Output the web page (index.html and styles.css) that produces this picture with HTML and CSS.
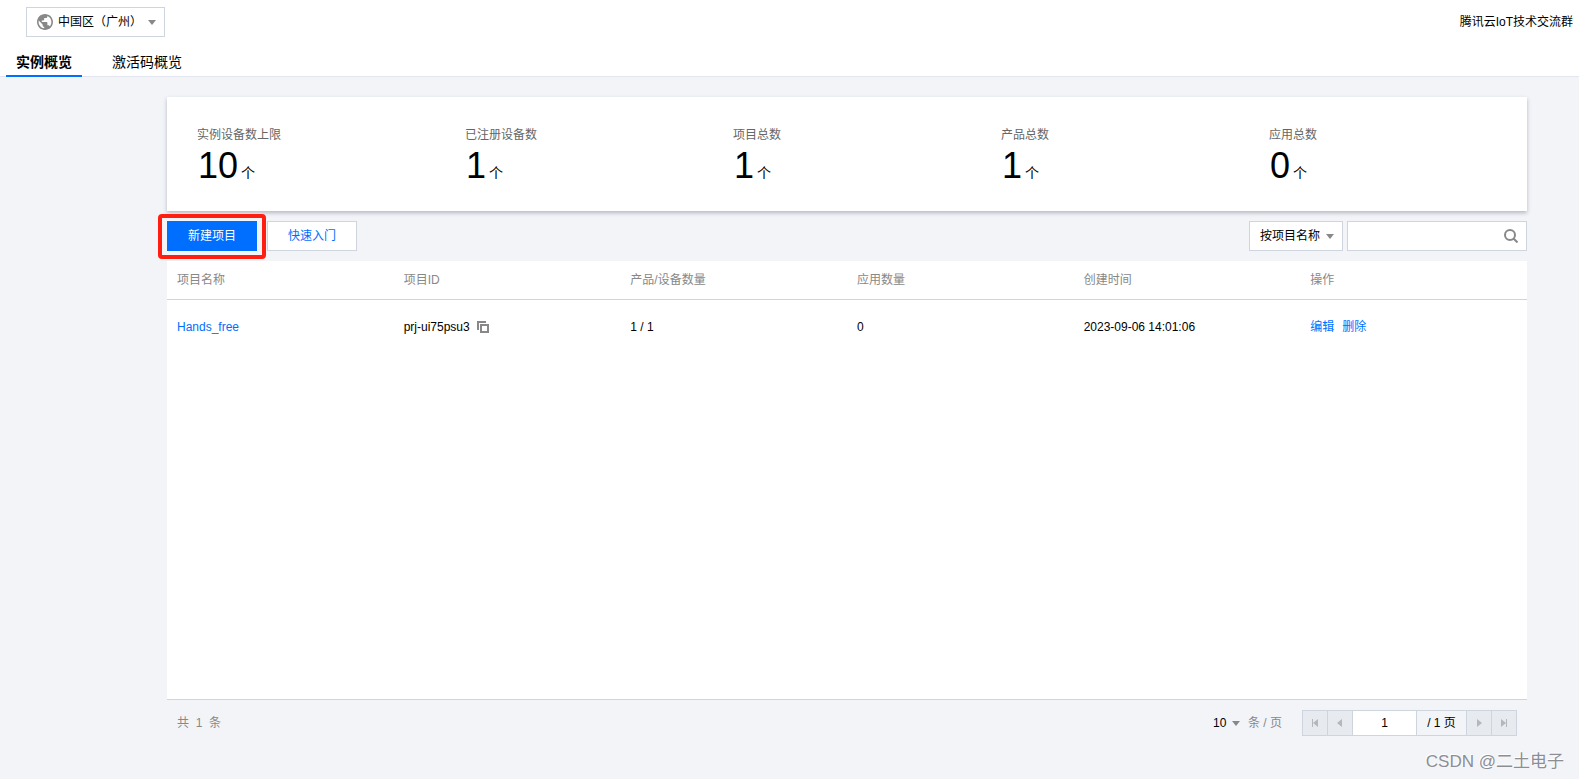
FILE: index.html
```html
<!DOCTYPE html>
<html lang="zh-CN">
<head>
<meta charset="utf-8">
<title>实例概览</title>
<link rel="stylesheet" href="styles.css">
</head>
<body>
<header class="header">
  <div class="topbar">
    <div class="picker region">
      <svg class="globe" viewBox="2 2 20 20" aria-hidden="true"><path d="M12 2C6.48 2 2 6.48 2 12s4.480 10 10 10 10-4.480 10-10S17.520 2 12 2zm-1 17.930c-3.950-.49-7-3.850-7-7.930 0-.62.08-1.210.21-1.790L9 15v1c0 1.100.9 2 2 2v1.930zm6.900-2.540c-.26-.81-1-1.390-1.900-1.390h-1v-3c0-.55-.45-1-1-1H8v-2h2c.55 0 1-.45 1-1V7h2c1.100 0 2-.9 2-2v-.41c2.930 1.190 5 4.060 5 7.410 0 2.080-.8 3.970-2.100 5.390z"/></svg>
      <select aria-label="地域"><option>中国区（广州）</option></select>
      <svg class="caret" viewBox="0 0 8 5" aria-hidden="true"><path d="M0 0h8L4 5z"/></svg>
    </div>
    <a class="group-link" href="#">腾讯云IoT技术交流群</a>
  </div>
  <nav class="tabs">
    <a class="tab tab-active" href="#">实例概览</a>
    <a class="tab" href="#">激活码概览</a>
  </nav>
</header>
<main class="content">
  <section class="stats">
    <div><div class="stat-label">实例设备数上限</div><div class="stat-value"><strong>10</strong><span>个</span></div></div>
    <div><div class="stat-label">已注册设备数</div><div class="stat-value"><strong>1</strong><span>个</span></div></div>
    <div><div class="stat-label">项目总数</div><div class="stat-value"><strong>1</strong><span>个</span></div></div>
    <div><div class="stat-label">产品总数</div><div class="stat-value"><strong>1</strong><span>个</span></div></div>
    <div><div class="stat-label">应用总数</div><div class="stat-value"><strong>0</strong><span>个</span></div></div>
  </section>
  <div class="toolbar">
    <div class="marked"><button class="btn btn-primary" type="button">新建项目</button></div>
    <button class="btn" type="button">快速入门</button>
    <div class="filters">
      <div class="picker filter">
        <select aria-label="搜索字段"><option>按项目名称</option></select>
        <svg class="caret" viewBox="0 0 8 5" aria-hidden="true"><path d="M0 0h8L4 5z"/></svg>
      </div>
      <div class="search">
        <input type="text" aria-label="搜索">
        <button type="button" aria-label="搜索"><svg viewBox="0 0 14 14" aria-hidden="true"><circle cx="6" cy="6" r="5"/><path d="M9.500 9.500l4 4"/></svg></button>
      </div>
    </div>
  </div>
  <div class="table-panel">
    <table class="table">
      <thead><tr><th>项目名称</th><th>项目ID</th><th>产品/设备数量</th><th>应用数量</th><th>创建时间</th><th>操作</th></tr></thead>
      <tbody><tr>
        <td><a href="#">Hands_free</a></td>
        <td><span class="id-cell">prj-ui75psu3<button class="copy" type="button" aria-label="复制"><svg viewBox="0 0 12 12" aria-hidden="true"><path d="M1 9V1h8M4 4h7v7H4z"/></svg></button></span></td>
        <td>1 / 1</td>
        <td>0</td>
        <td>2023-09-06 14:01:06</td>
        <td><span class="actions"><a href="#">编辑</a><a href="#">删除</a></span></td>
      </tr></tbody>
    </table>
  </div>
  <footer class="footer">
    <span class="total">共&nbsp; 1&nbsp; 条</span>
    <div class="page-size">
      <div class="picker size-picker">
        <select aria-label="每页条数"><option>10</option></select>
        <svg class="caret" viewBox="0 0 8 5" aria-hidden="true"><path d="M0 0h8L4 5z"/></svg>
      </div>
      <span>条 / 页</span>
    </div>
    <div class="pager">
      <button type="button" aria-label="第一页" disabled><svg viewBox="0 0 8 8" aria-hidden="true"><path d="M1 0h1v8H1zM7 0v8L2 4z"/></svg></button>
      <button type="button" aria-label="上一页" disabled><svg viewBox="0 0 8 8" aria-hidden="true"><path d="M6 0v8L1 4z"/></svg></button>
      <input type="text" value="1" aria-label="页码">
      <span class="page-count">/ 1 页</span>
      <button type="button" aria-label="下一页" disabled><svg viewBox="0 0 8 8" aria-hidden="true"><path d="M2 0v8l5-4z"/></svg></button>
      <button type="button" aria-label="最后一页" disabled><svg viewBox="0 0 8 8" aria-hidden="true"><path d="M1 0v8l5-4zM6 0h1v8H6z"/></svg></button>
    </div>
  </footer>
</main>
<div class="watermark">CSDN @二土电子</div>
</body>
</html>
```

FILE: styles.css
```css
* { box-sizing: border-box; }
body {
  margin: 0;
  min-height: 100vh;
  display: flex;
  flex-direction: column;
  background: #f2f4f8;
  color: #000;
  font: 12px/18px "Liberation Sans", "Noto Sans CJK SC", sans-serif;
}
button, input, select { font: inherit; color: inherit; margin: 0; border-radius: 0; }
a { color: #006eff; text-decoration: none; }
svg { display: block; }

.header { background: #fff; border-bottom: 1px solid #e3e6ee; }
.topbar {
  display: flex;
  justify-content: space-between;
  align-items: center;
  padding: 7px 6px 0 26px;
}
.group-link { color: #000; }

.picker { display: grid; align-items: center; height: 30px; background: #fff; border: 1px solid #cfd5de; }
.picker > * { grid-row: 1; grid-column: 1; }
.picker select {
  appearance: none;
  width: 100%;
  height: 100%;
  padding: 0 10px;
  border: 0;
  background: transparent;
}
.caret { width: 8px; height: 5px; margin-right: 8px; fill: #888; justify-self: end; pointer-events: none; }
.region { width: 139px; }
.region select { padding-left: 31px; }
.globe { width: 16px; height: 16px; margin-left: 10px; fill: #888; }

.tabs { display: flex; gap: 20px; padding: 10px 6px 0; }
.tab { padding: 5px 10px 3px; color: #000; font-size: 14px; line-height: 20px; border-bottom: 2px solid transparent; margin-bottom: -1px; }
.tab-active { font-weight: bold; border-color: #006eff; }

.content { flex: 1; display: flex; flex-direction: column; padding: 20px 52px 0 167px; }
.stats {
  display: grid;
  grid-template-columns: repeat(5, 1fr);
  gap: 40px;
  padding: 29px 30px 16px;
  background: #fff;
  box-shadow: 0 2px 4px rgba(54, 58, 80, .32);
}
.stat-label { color: #666; }
.stat-value { display: flex; align-items: baseline; gap: 3px; padding-left: 1px; line-height: 44px; }
.stat-value strong { font-size: 36px; font-weight: normal; }
.stat-value span { font-size: 14px; }

.toolbar { display: flex; gap: 10px; padding: 10px 0; }
.marked { position: relative; }
.marked::after {
  content: "";
  position: absolute;
  inset: -7px -9px -8px;
  border: 4px solid #ff1e10;
  border-radius: 4px;
  pointer-events: none;
}
.btn { display: block; min-width: 90px; height: 30px; padding: 0 20px; border: 1px solid #cfd5de; background: #fff; color: #006eff; }
.btn-primary { background: #006eff; border-color: #006eff; color: #fff; }
.filters { display: flex; gap: 4px; margin-left: auto; }
.filter { width: 94px; }
.search { display: flex; width: 180px; height: 30px; background: #fff; border: 1px solid #cfd5de; }
.search input { flex: 1; min-width: 0; padding: 0 10px; border: 0; background: transparent; }
.search button { padding: 0 8px; border: 0; background: transparent; }
.search svg { width: 14px; height: 14px; fill: none; stroke: #888; stroke-width: 2; }

.table-panel { flex: 1; background: #fff; border-bottom: 1px solid #cfd5de; }
.table { width: 100%; table-layout: fixed; border-collapse: collapse; }
.table th { padding: 10px; font-weight: normal; text-align: left; color: #888; border-bottom: 1px solid #cfd5de; }
.table td { padding: 18px 10px; }
.id-cell { display: flex; align-items: center; gap: 7px; }
.copy { padding: 0; border: 0; background: transparent; }
.copy svg { width: 12px; height: 12px; fill: none; stroke: #888; stroke-width: 2; }
.actions { display: flex; gap: 8px; }

.footer { display: flex; align-items: center; padding: 10px 10px 43px; color: #888; }
.page-size { display: flex; align-items: center; gap: 8px; margin-left: auto; margin-right: 20px; }
.size-picker { width: 27px; height: 26px; border: 0; background: transparent; color: #000; }
.size-picker select { padding: 0; }
.size-picker .caret { margin-right: 0; }
.pager { display: flex; height: 26px; border: 1px solid #cfd5de; color: #000; }
.pager > * + * { border: 0; border-left: 1px solid #cfd5de; }
.pager button { width: 25px; padding: 0 8px; border-width: 0; background: #e7eaef; }
.pager button:first-child { width: 24px; }
.pager button + button, .page-count ~ button { border-left: 1px solid #cfd5de; }
.pager svg { width: 8px; height: 8px; fill: #b4b7bc; }
.pager input { width: 64px; padding: 0; text-align: center; background: #fff; }
.page-count { width: 50px; line-height: 24px; text-align: center; }

.watermark {
  position: absolute;
  right: 15px;
  bottom: 5px;
  color: #8c8e93;
  font: 17px/24px "Liberation Sans", "Noto Sans CJK SC", sans-serif;
  text-shadow: -1px -1px 0 #fff;
}
```
